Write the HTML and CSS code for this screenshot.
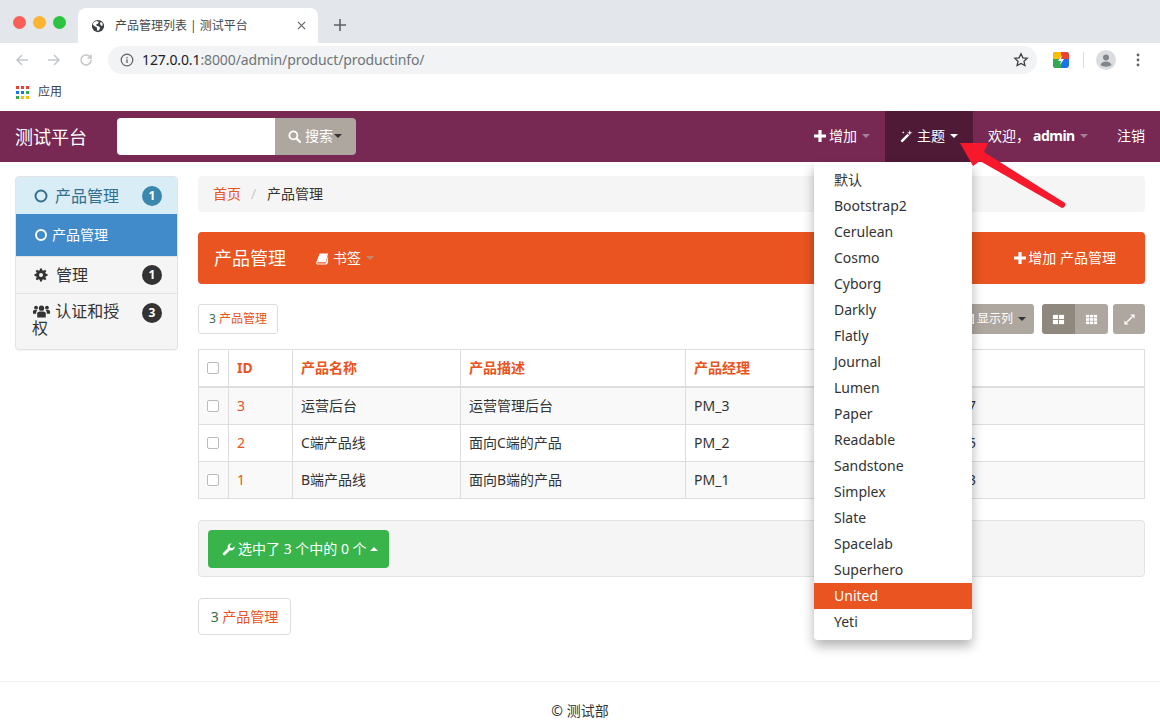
FILE: index.html
```html
<!DOCTYPE html>
<html lang="zh">
<head>
<meta charset="utf-8">
<title>产品管理列表 | 测试平台</title>
<link rel="stylesheet" href="styles.css">
</head>
<body>
<div class="tabstrip">
  <div class="lights"><i class="light red"></i><i class="light amber"></i><i class="light green"></i></div>
  <div class="tab">
    <svg class="globe" viewBox="0 0 16 16"><circle cx="8" cy="8" r="7" fill="#3c4043"/><path d="M3 4l3-1.600 3 .6-1 2.400-2 .6.6 2 2.400.4 1.600 2-2 3-1.600-.4-.4-3.600L3.600 8 2 6z" fill="#fff"/><path d="M11 3l2.400 2-.4 3-1.800-.6-.8-2z" fill="#fff"/></svg>
    <span class="tab-title">产品管理列表 | 测试平台</span>
    <svg class="tab-x" viewBox="0 0 10 10"><path d="M1 1l8 8M9 1l-8 8" stroke="#5f6368" stroke-width="1.300"/></svg>
  </div>
  <svg class="newtab" viewBox="0 0 12 12"><path d="M6 0v12M0 6h12" stroke="#5f6368" stroke-width="1.600"/></svg>
</div>
<div class="toolbar">
  <svg class="tb-ic" viewBox="0 0 16 16"><path d="M14 8H3M8 3L3 8l5 5" fill="none" stroke="#c4c7ca" stroke-width="1.500"/></svg>
  <svg class="tb-ic" viewBox="0 0 16 16"><path d="M2 8h11M8 3l5 5-5 5" fill="none" stroke="#c4c7ca" stroke-width="1.500"/></svg>
  <svg class="tb-ic" viewBox="0 0 16 16"><path d="M13 8a5 5 0 1 1-1.500-3.600L13 6V2.500M13 6H9.500" fill="none" stroke="#c4c7ca" stroke-width="1.500"/></svg>
  <div class="omnibox">
    <svg class="info" viewBox="0 0 14 14"><circle cx="7" cy="7" r="5.800" fill="none" stroke="#5f6368" stroke-width="1.200"/><path d="M7 6.200v3.800M7 4v1.200" stroke="#5f6368" stroke-width="1.300"/></svg>
    <span class="url"><b>127.0.0.1</b>:8000/admin/product/productinfo/</span>
    <svg class="star" viewBox="0 0 16 16"><path d="M8 1.800l1.900 4 4.300.5-3.200 3 .9 4.300L8 11.400l-3.900 2.200.9-4.300-3.200-3 4.300-.5z" fill="none" stroke="#3c4043" stroke-width="1.300"/></svg>
  </div>
  <svg class="ext" viewBox="0 0 16 16"><rect width="16" height="16" rx="3" fill="#1a73e8"/><path d="M0 3a3 3 0 0 1 3-3h5v7H0z" fill="#fbbc04"/><path d="M8 0h5a3 3 0 0 1 3 3v4H8z" fill="#ea4335"/><path d="M0 7h8v9H3a3 3 0 0 1-3-3z" fill="#34a853"/><path d="M9 3L5 9h3l-1 4 4-6H8z" fill="#fff"/></svg>
  <i class="tb-sep"></i>
  <svg class="avatar" viewBox="0 0 20 20"><circle cx="10" cy="10" r="10" fill="#dadce0"/><circle cx="10" cy="7.500" r="3" fill="#80868b"/><path d="M4.500 15c1-2.800 3.200-3.500 5.500-3.500s4.500.7 5.500 3.500c-3 2.200-8 2.200-11 0z" fill="#80868b"/></svg>
  <svg class="dots" viewBox="0 0 4 14"><circle cx="2" cy="2" r="1.400" fill="#5f6368"/><circle cx="2" cy="7" r="1.400" fill="#5f6368"/><circle cx="2" cy="12" r="1.400" fill="#5f6368"/></svg>
</div>
<div class="bookmarks">
  <svg class="apps" viewBox="0 0 13 13"><g fill="#e94235"><rect width="3" height="3"/><rect x="5" width="3" height="3"/><rect x="10" width="3" height="3"/></g><g fill="#1a73e8"><rect y="5" width="3" height="3"/><rect x="5" y="5" width="3" height="3"/></g><rect x="10" y="5" width="3" height="3" fill="#34a853"/><g fill="#fbbc04"><rect x="5" y="10" width="3" height="3"/><rect x="10" y="10" width="3" height="3"/></g><rect y="10" width="3" height="3" fill="#34a853"/></svg>
  <span>应用</span>
</div>

<nav class="navbar">
  <a class="brand">测试平台</a>
  <form class="search">
    <input class="search-input" type="text">
    <span class="search-btn">
      <svg class="fa" viewBox="0 0 14 14"><circle cx="5.800" cy="5.800" r="4.300" fill="none" stroke="currentColor" stroke-width="2"/><path d="M9 9l4 4" stroke="currentColor" stroke-width="2.400" stroke-linecap="round"/></svg>
      <span>搜索</span><i class="caret caret-dark"></i>
    </span>
  </form>
  <ul class="nav-right">
    <li class="nav-item">
      <svg class="fa-sm" viewBox="0 0 12 12"><path d="M6 0v12M0 6h12" stroke="currentColor" stroke-width="3.200"/></svg>增加<i class="caret caret-dim"></i>
    </li>
    <li class="nav-item is-open">
      <svg class="fa" viewBox="0 0 14 14"><path d="M1.500 12.500L9 5" stroke="currentColor" stroke-width="2.600"/><path d="M10.500 0l.7 2.300 2.300.7-2.300.7-.7 2.300-.7-2.300L7.500 3l2.300-.7zM3.500 1l.4 1.100 1.100.4-1.100.4-.4 1.100-.4-1.100L2 2.500l1.100-.4z" fill="currentColor"/></svg>
      主题<i class="caret"></i>
      <ul class="menu">
        <li class="menu-item">默认</li>
        <li class="menu-item">Bootstrap2</li>
        <li class="menu-item">Cerulean</li>
        <li class="menu-item">Cosmo</li>
        <li class="menu-item">Cyborg</li>
        <li class="menu-item">Darkly</li>
        <li class="menu-item">Flatly</li>
        <li class="menu-item">Journal</li>
        <li class="menu-item">Lumen</li>
        <li class="menu-item">Paper</li>
        <li class="menu-item">Readable</li>
        <li class="menu-item">Sandstone</li>
        <li class="menu-item">Simplex</li>
        <li class="menu-item">Slate</li>
        <li class="menu-item">Spacelab</li>
        <li class="menu-item">Superhero</li>
        <li class="menu-item is-active">United</li>
        <li class="menu-item">Yeti</li>
      </ul>
    </li>
    <li class="nav-item nav-user">欢迎，<strong class="user">admin</strong><i class="caret caret-dim"></i></li>
    <li class="nav-item">注销</li>
  </ul>
</nav>

<svg class="pointer" viewBox="0 0 120 80"><path d="M2 2L30 2 26 11 107 62Q108 66 104 67L22 20 15 25z" fill="#f8182c"/></svg>

<main class="layout">
  <aside class="sidebar">
    <div class="side-row side-head">
      <svg class="ring" viewBox="0 0 14 14"><circle cx="7" cy="7" r="5.500" fill="none" stroke="currentColor" stroke-width="2"/></svg>
      <span class="side-label">产品管理</span><b class="badge badge-blue">1</b>
    </div>
    <div class="side-row side-active">
      <svg class="ring ring-sub" viewBox="0 0 14 14"><circle cx="7" cy="7" r="5" fill="none" stroke="currentColor" stroke-width="2"/></svg>
      <span class="side-sub">产品管理</span>
    </div>
    <div class="side-row side-plain">
      <svg class="cog" viewBox="0 0 14 14"><path d="M6 .5h2l.3 1.700 1.200.5L11 1.700l1.300 1.300-1 1.500.5 1.200 1.700.3v2l-1.700.3-.5 1.200 1 1.500L11 12.300l-1.500-1-1.200.5-.3 1.700H6l-.3-1.700-1.200-.5-1.500 1L1.700 11l1-1.500-.5-1.200L.5 8V6l1.700-.3.5-1.200-1-1.500L3 1.700l1.500 1 1.200-.5z" fill="#333"/><circle cx="7" cy="7" r="2" fill="#f5f5f5"/></svg>
      <span class="side-label">管理</span><b class="badge">1</b>
    </div>
    <div class="side-row side-plain side-wrap">
      <p class="side-text"><svg class="users" viewBox="0 0 18 14"><g fill="#333"><circle cx="9" cy="4" r="2.800"/><path d="M4.500 14V9.500C4.500 8 6 7.500 9 7.500s4.500.5 4.500 2V14z"/><circle cx="3.200" cy="3.500" r="2"/><path d="M0 10V7.500C0 6.300 1 6 3.200 6c.6 0 1 0 1.300.1C3.600 7 3.300 8 3.300 10z"/><circle cx="14.800" cy="3.500" r="2"/><path d="M18 10V7.500C18 6.300 17 6 14.800 6c-.6 0-1 0-1.300.1.900.9 1.200 1.900 1.200 3.900z"/></g></svg> 认证和授权</p>
      <b class="badge">3</b>
    </div>
  </aside>

  <section class="content">
    <ol class="crumbs">
      <li class="crumb-link">首页</li>
      <li class="crumb-sep">/</li>
      <li>产品管理</li>
    </ol>

    <header class="title-bar">
      <h1 class="title">产品管理</h1>
      <span class="bookmark-btn">
        <svg class="fa" viewBox="0 0 14 14"><path d="M4 1.500h9l-2.500 9.500H2c-1 0-1.300 1.500 0 1.500h8.500L13 4v7.500l-1.500 2H2C.5 13.500 0 12 .5 10.500z" fill="currentColor"/></svg>
        书签<i class="caret caret-dim"></i>
      </span>
      <span class="add-link">
        <svg class="fa-sm" viewBox="0 0 12 12"><path d="M6 0v12M0 6h12" stroke="currentColor" stroke-width="3.200"/></svg>增加 产品管理
      </span>
    </header>

    <div class="tools">
      <span class="count-box"><em class="num">3</em> 产品管理</span>
      <div class="tools-right">
        <span class="btn btn-cols">
          <svg class="fa-sm" viewBox="0 0 12 12"><path d="M0 1h12v10H0zM1.500 3.500v6h9v-6z" fill="currentColor" fill-rule="evenodd"/><path d="M3 5h6M3 7.500h6" stroke="currentColor"/></svg>
          <span class="btn-text">显示列</span><i class="caret caret-dark"></i>
        </span>
        <div class="btn-group">
          <span class="btn btn-seg is-on">
            <svg class="fa" viewBox="0 0 14 14"><g fill="currentColor"><rect x="1" y="2" width="5.500" height="4.500"/><rect x="7.500" y="2" width="5.500" height="4.500"/><rect x="1" y="7.500" width="5.500" height="4.500"/><rect x="7.500" y="7.500" width="5.500" height="4.500"/></g></svg>
          </span>
          <span class="btn btn-seg">
            <svg class="fa" viewBox="0 0 14 14"><g fill="currentColor"><rect x="1" y="2" width="3.500" height="2.800"/><rect x="5.250" y="2" width="3.500" height="2.800"/><rect x="9.500" y="2" width="3.500" height="2.800"/><rect x="1" y="5.600" width="3.500" height="2.800"/><rect x="5.250" y="5.600" width="3.500" height="2.800"/><rect x="9.500" y="5.600" width="3.500" height="2.800"/><rect x="1" y="9.200" width="3.500" height="2.800"/><rect x="5.250" y="9.200" width="3.500" height="2.800"/><rect x="9.500" y="9.200" width="3.500" height="2.800"/></g></svg>
          </span>
        </div>
        <span class="btn btn-full">
          <svg class="fa" viewBox="0 0 14 14"><path d="M4 10l6-6" stroke="currentColor" stroke-width="1.500"/><path d="M8 1.500h4.500V6zM1.500 8V12.500H6z" fill="currentColor"/></svg>
        </span>
      </div>
    </div>

    <table class="grid">
      <thead>
        <tr>
          <th class="col-check"><i class="check"></i></th>
          <th class="col-id">ID</th>
          <th class="col-name">产品名称</th>
          <th class="col-desc">产品描述</th>
          <th class="col-pm">产品经理</th>
          <th>电话</th>
        </tr>
      </thead>
      <tbody>
        <tr class="row-odd">
          <td><i class="check"></i></td><td class="cell-id">3</td><td>运营后台</td><td>运营管理后台</td><td>PM_3</td><td>13800000007</td>
        </tr>
        <tr>
          <td><i class="check"></i></td><td class="cell-id">2</td><td>C端产品线</td><td>面向C端的产品</td><td>PM_2</td><td>13800000005</td>
        </tr>
        <tr class="row-odd">
          <td><i class="check"></i></td><td class="cell-id">1</td><td>B端产品线</td><td>面向B端的产品</td><td>PM_1</td><td>13800000003</td>
        </tr>
      </tbody>
    </table>

    <div class="actions">
      <span class="btn-action">
        <svg class="fa" viewBox="0 0 14 14"><path d="M13.500 3.500a3.800 3.800 0 0 1-5 4.300L3 13.300c-.8.800-3-1.300-2.200-2.200l5.500-5.500A3.800 3.800 0 0 1 10.500.5L8.300 2.700l.5 2.500 2.500.5z" fill="currentColor"/></svg>选中了 3 个中的 0 个<i class="caret caret-up"></i>
      </span>
    </div>

    <div class="pager"><em class="num">3</em> 产品管理</div>
  </section>
</main>

<footer class="footer">© 测试部</footer>
</body>
</html>
```
FILE: styles.css
```css
* { box-sizing: border-box; }
html, body { margin: 0; padding: 0; height: 721px; overflow: hidden; }
body {
  width: 1160px;
  position: relative;
  background: #fff;
  color: #333;
  font: 14px/20px "Noto Sans", "Noto Sans CJK SC", sans-serif;
}
ul, ol { list-style: none; margin: 0; padding: 0; }
em { font-style: normal; }

/* browser chrome */
.tabstrip { height: 43px; background: #e3e6ea; display: flex; align-items: flex-end; }
.lights { display: flex; gap: 7px; width: 78px; flex: none; padding: 0 0 14px 13px; }
.light { width: 13px; height: 13px; border-radius: 50%; }
.red { background: #f95f58; }
.amber { background: #fbb430; }
.green { background: #2bc440; }
.tab { width: 240px; height: 35px; background: #fff; border-radius: 8px 8px 0 0; display: flex; align-items: center; padding: 0 12px 0 13px; }
.globe { width: 14px; height: 14px; margin-right: 10px; }
.tab-title { flex: 1; font-size: 12px; color: #45494d; }
.tab-x { width: 9px; height: 9px; }
.newtab { width: 12px; height: 12px; margin: 0 0 12px 16px; }
.toolbar { height: 34px; display: flex; align-items: center; padding: 0 20px 0 14px; }
.tb-ic { width: 16px; height: 16px; margin-right: 16px; flex: none; }
.tb-ic:nth-of-type(3) { margin-right: 14px; }
.omnibox { width: 929px; height: 28px; border-radius: 14px; background: #f1f3f4; display: flex; align-items: center; padding: 0 8px 0 12px; }
.info { width: 14px; height: 14px; margin-right: 8px; }
.url { flex: 1; font-size: 14px; color: #70757a; letter-spacing: -.1px; }
.url b { font-weight: 400; color: #202124; }
.star { width: 16px; height: 16px; }
.ext { width: 16px; height: 16px; margin: 0 14px 0 16px; flex: none; }
.tb-sep { width: 1px; height: 16px; background: #dadce0; margin-right: 12px; }
.avatar { width: 20px; height: 20px; margin-right: 20px; flex: none; }
.dots { width: 4px; height: 14px; flex: none; }
.bookmarks { height: 34px; display: flex; align-items: center; padding: 0 0 4px 16px; font-size: 12px; color: #3c4043; }
.apps { width: 13px; height: 13px; margin-right: 9px; }

/* navbar */
.navbar { height: 51px; background: #772953; display: flex; align-items: center; color: #fff; }
.brand { font-size: 18px; padding: 0 15px; width: 117px; flex: none; white-space: nowrap; }
.search { display: flex; height: 37px; margin-top: -1px; }
.search-input { width: 158px; height: 37px; border: 0; padding: 0; background: #fff; border-radius: 4px 0 0 4px; }
.search-btn { width: 81px; padding-left: 13px; background: #aea79f; border-radius: 0 4px 4px 0; display: flex; align-items: center; }
.search-btn .fa { margin-right: 4px; }
.search-btn .caret { margin-left: 1px; }
.fa { width: 13px; height: 13px; flex: none; }
.fa-sm { width: 12px; height: 12px; flex: none; }
.caret { display: inline-block; width: 0; height: 0; margin-left: 5px; border-top: 4px solid #fff; border-left: 4px solid transparent; border-right: 4px solid transparent; vertical-align: middle; }
.caret-dark { border-top-color: #333; margin-left: 2px; }
.caret-dim { border-top-color: #a77f97; }
.caret-up { border-top: 0; border-bottom: 4px solid #fff; margin-left: 0; }
.nav-right { margin-left: auto; display: flex; align-self: stretch; }
.nav-item { position: relative; display: flex; align-items: center; padding: 0 15px 1px; white-space: nowrap; }
.nav-item .fa-sm { margin-right: 3px; }
.nav-item.is-open { background: #4e1a36; width: 88px; }
.nav-item.is-open .fa { margin-right: 4px; }
.nav-user { width: 129px; }
.user { margin-left: 3px; letter-spacing: -.5px; }

/* dropdown */
.menu { position: absolute; z-index: 5; top: 100%; left: -71px; width: 158px; padding: 5px 0; background: #fff; border-radius: 0 0 4px 4px; box-shadow: 0 6px 12px rgba(0, 0, 0, .3); color: #333; }
.menu-item { height: 26px; padding: 3px 20px; line-height: 20px; }
.menu-item.is-active { background: #e95420; color: #fff; }

/* red annotation arrow */
.pointer { position: absolute; z-index: 6; left: 958px; top: 141px; width: 120px; height: 80px; }

/* layout */
.layout { display: flex; gap: 20px; padding: 14px 15px 0; align-items: flex-start; }
.sidebar { width: 163px; flex: none; border: 1px solid #e3e3e3; border-radius: 4px; background: #f5f5f5; overflow: hidden; box-shadow: 0 1px 1px rgba(0, 0, 0, .05); }
.side-row { display: flex; align-items: center; padding: 0 15px 0 18px; position: relative; }
.ring { width: 14px; height: 14px; margin-right: 7px; flex: none; }
.ring-sub { margin-right: 4px; }
.cog { width: 14px; height: 14px; margin-right: 8px; flex: none; }
.users { width: 17px; height: 14px; margin: 0 1px; vertical-align: -1px; }
.side-label { font-size: 16px; flex: 1; }
.side-head { height: 37px; background: #d9edf7; color: #31708f; }
.side-active { height: 42px; background: #428bca; color: #fff; }
.side-sub { font-size: 14px; }
.side-plain { height: 37px; border-top: 1px solid #e3e3e3; }
.side-wrap { height: 56px; padding: 9px 15px 0 16px; align-items: flex-start; }
.side-text { margin: 0 12px 0 0; flex: 1; font-size: 16px; line-height: 17px; }
.badge { display: block; width: 20px; height: 20px; border-radius: 50%; background: #333; color: #fff; font-size: 12px; line-height: 20px; text-align: center; flex: none; }
.badge-blue { background: #3a87ad; }

/* content */
.content { width: 947px; }
.crumbs { height: 36px; display: flex; align-items: center; gap: 10px; padding: 0 15px; background: #f5f5f5; border-radius: 4px; }
.crumb-link { color: #e95420; }
.crumb-sep { color: #ccc; width: 6px; }
.title-bar { height: 52px; margin-top: 20px; background: #e95420; border-radius: 4px; color: #fff; display: flex; align-items: center; padding: 0 29px 0 16px; }
.title { margin: 0; font-size: 18px; font-weight: 400; }
.bookmark-btn { margin-left: 30px; display: flex; align-items: center; gap: 4px; }
.bookmark-btn .caret { margin-left: 1px; border-top-color: #c08a70; }
.add-link { margin-left: auto; display: flex; align-items: center; gap: 2px; }
.tools { display: flex; align-items: center; margin-top: 20px; height: 30px; }
.count-box { height: 30px; padding: 0 10px; border: 1px solid #ddd; border-radius: 3px; font-size: 12px; line-height: 28px; color: #e95420; background: #fff; }
.num { color: #3a6b4a; }
.tools-right { margin-left: auto; display: flex; align-items: center; gap: 5px; }
.btn { height: 30px; background: #aea79f; color: #fff; font-size: 12px; border-radius: 3px; display: flex; align-items: center; justify-content: center; }
.btn-cols { padding: 0 8px 0 12px; margin-right: 3px; }
.btn-text { margin-left: 3px; }
.btn-cols .caret-dark { margin-left: 5px; }
.btn-group { display: flex; }
.btn-seg { width: 33px; border-radius: 0 3px 3px 0; }
.btn-seg.is-on { background: #8f887f; border-radius: 3px 0 0 3px; }
.btn-full { width: 32px; }

/* table */
.grid { width: 947px; margin-top: 15px; border-collapse: collapse; table-layout: fixed; border: 1px solid #ddd; }
.grid th, .grid td { border: 1px solid #ddd; padding: 8px 8px; text-align: left; height: 37px; white-space: nowrap; overflow: hidden; }
.grid th { font-weight: 700; color: #e95420; border-bottom-width: 2px; }
.row-odd { background: #f9f9f9; }
.cell-id { color: #e95420; }
.col-check { width: 30px; }
.col-id { width: 64px; }
.col-name { width: 168px; }
.col-desc { width: 225px; }
.col-pm { width: 194px; }
.check { display: block; width: 12px; height: 12px; border: 1px solid #bbb; border-radius: 2px; background: #fff; }

/* bottom */
.actions { height: 57px; margin-top: 21px; padding: 9px; background: #f5f5f5; border: 1px solid #e3e3e3; border-radius: 4px; }
.btn-action { display: inline-flex; align-items: center; height: 38px; width: 181px; padding-left: 14px; background: #38b44a; color: #fff; border-radius: 4px; gap: 3px; }
.pager { width: 93px; height: 37px; margin-top: 21px; border: 1px solid #ddd; border-radius: 4px; line-height: 35px; text-align: center; color: #e95420; }
.footer { position: absolute; left: 0; right: 0; top: 681px; height: 40px; border-top: 1px solid #eee; padding-top: 19px; text-align: center; }
```
